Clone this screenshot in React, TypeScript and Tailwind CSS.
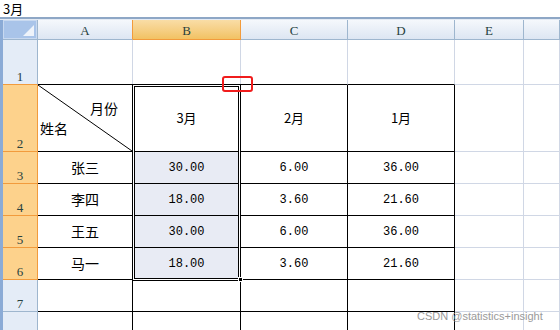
const mono = "font-['Liberation_Mono',monospace]";
const serif = "font-['Liberation_Serif',serif]";
const cjk = "font-['Noto_Sans_CJK_SC','Liberation_Sans',sans-serif]";

const colLetters = ['A', 'B', 'C', 'D', 'E', ''];
const rowHeights = ['h-[45px]', 'h-[67px]', 'h-[32px]', 'h-[32px]', 'h-[32px]', 'h-[32px]', 'h-[32px]', 'h-[32px]'];

const data: string[][] = [
  ['张三', '30.00', '6.00', '36.00'],
  ['李四', '18.00', '3.60', '21.60'],
  ['王五', '30.00', '6.00', '36.00'],
  ['马一', '18.00', '3.60', '21.60'],
];

function RowHeader({ row }: { row: number }) {
  const selected = row >= 2 && row <= 6;
  const cls = selected
    ? 'bg-[#fdd28c] border-r border-b border-[#f29b3c]'
    : row === 1
      ? 'bg-[#e4ecf7] border-r border-[#9eb6ce] border-b border-b-[#f29b3c]'
      : 'bg-[#e4ecf7] border-r border-b border-[#9eb6ce]';
  return (
    <div className={`flex items-end justify-center pb-[1px] text-[13px] leading-none text-[#27413e] ${serif} ${cls}`}>
      {row}
    </div>
  );
}

function Cell({ row, col }: { row: number; col: number }) {
  const inTable = col <= 3;
  const right = inTable && row >= 2 ? 'border-r-black' : 'border-r-[#d0d7e5]';
  const bottom = inTable ? 'border-b-black' : 'border-b-[#d0d7e5]';
  const fill = col === 1 && row >= 3 && row <= 6 ? 'bg-[#e8ebf4]' : 'bg-white';

  let content: React.ReactNode = null;
  if (row === 2 && col === 0) {
    content = (
      <>
        <svg className="absolute inset-0 h-full w-full" viewBox="0 0 100 100" preserveAspectRatio="none">
          <line x1="0" y1="0" x2="100" y2="100" stroke="black" strokeWidth="1" vectorEffect="non-scaling-stroke" />
        </svg>
        <span className={`absolute left-[52px] top-[16px] text-[14px] leading-none ${cjk}`}>月份</span>
        <span className={`absolute left-[2px] top-[36px] text-[14px] leading-none ${cjk}`}>姓名</span>
      </>
    );
  } else if (row === 2 && col >= 1 && col <= 3) {
    content = <span className={`text-[13px] ${cjk}`}>{['3月', '2月', '1月'][col - 1]}</span>;
  } else if (row >= 3 && row <= 6 && col <= 3) {
    const v = data[row - 3][col];
    content = col === 0
      ? <span className={`text-[14px] ${cjk}`}>{v}</span>
      : <span className={`text-[12px] ${mono}`}>{v}</span>;
  }

  return (
    <div className={`relative flex items-center justify-center border-r border-b text-black ${right} ${bottom} ${fill}`}>
      {content}
    </div>
  );
}

export default function App() {
  return (
    <div className="relative h-[330px] w-[560px] overflow-hidden bg-white">
      {/* formula bar */}
      <div className={`flex h-[17px] items-center pl-[3px] text-[13px] leading-none text-black ${cjk}`}>3月</div>
      <div className="h-[2px] bg-[#8ea7c6]" />
      <div className="h-[1px] bg-[#e3eaf4]" />

      <div className="flex">
        <div className="w-[3px] shrink-0 bg-[#8babd6]" />
        <div className="grid flex-1 grid-cols-[35px_95px_108px_107px_107px_69px_1fr]">
          {/* column headers */}
          <div className="relative h-[20px] border-r border-b border-[#9eb6ce] bg-[#a9c4e9] shadow-[inset_0_0_0_1px_#c8d9f0]">
            <svg className="absolute right-[3px] bottom-[3px]" width="11" height="11" viewBox="0 0 11 11">
              <polygon points="11,0 11,11 0,11" fill="#eef3fa" />
            </svg>
          </div>
          {colLetters.map((c, i) => (
            <div
              key={i}
              className={`flex h-[20px] items-center justify-center border-b border-r pt-[1px] text-[13px] leading-none text-[#27413e] ${serif} ${
                i === 1
                  ? 'border-[#f29b3c] bg-linear-to-b from-[#f9dda6] to-[#f2c262]'
                  : i === 0
                    ? 'border-b-[#9eb6ce] border-r-[#f29b3c] bg-linear-to-b from-[#f5f8fc] to-[#dde6f2]'
                    : 'border-[#9eb6ce] bg-linear-to-b from-[#f5f8fc] to-[#dde6f2]'
              }`}
            >
              {c}
            </div>
          ))}

          {rowHeights.map((h, r) => (
            <div key={r} className="contents">
              <div className={`${h} grid`}>
                <RowHeader row={r + 1} />
              </div>
              {colLetters.map((_, c) => (
                <Cell key={c} row={r + 1} col={c} />
              ))}
            </div>
          ))}
        </div>
      </div>

      {/* selection B2:B6 */}
      <div className="pointer-events-none absolute left-[132px] top-[84px] h-[197px] w-[109px] border border-black shadow-[inset_0_0_0_1px_#fff,inset_0_0_0_2px_#000]" />
      <div className="pointer-events-none absolute left-[238px] top-[277px] h-[5px] w-[5px] border border-white bg-black" />

      {/* red marker */}
      <div className="pointer-events-none absolute left-[222px] top-[76px] h-[16px] w-[31px] rounded-[3px] border-2 border-[#f01c1c]" />

      {/* watermark */}
      <div className="pointer-events-none absolute left-[417px] top-[308px] text-[11px] text-[#9a9a9a] font-['Liberation_Sans',sans-serif]">
        CSDN @statistics+insight
      </div>
    </div>
  );
}
